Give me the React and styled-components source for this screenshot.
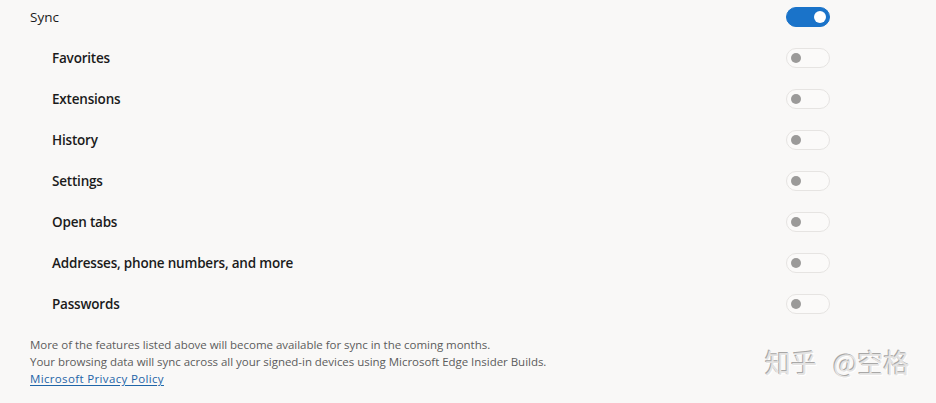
import React, { useState } from "react";
import styled, { createGlobalStyle } from "styled-components";

const Global = createGlobalStyle`
  html, body { margin: 0; padding: 0; background: #f9f8f7; }
  body { width: 936px; height: 403px; overflow: hidden; position: relative; }
`;

const Page = styled.div`
  width: 936px;
  height: 403px;
  box-sizing: border-box;
  padding: 0 106px 0 30px;
  font-family: "Open Sans", "Noto Sans", sans-serif;
  color: #1b1b1b;
  position: relative;
`;

const List = styled.div`
  display: flex;
  flex-direction: column;
  gap: 7px;
`;

const Row = styled.div`
  height: 34px;
  display: flex;
  align-items: center;
  justify-content: space-between;
  padding-left: ${(p) => (p.$nested ? "22px" : "0")};
`;

const Label = styled.span`
  font-size: 13.5px;
  font-weight: ${(p) => (p.$main ? 400 : 600)};
  letter-spacing: ${(p) => (p.$main ? "0" : "-0.2px")};
`;

const Track = styled.button`
  width: 44px;
  height: 20px;
  border-radius: 10px;
  box-sizing: border-box;
  padding: 0;
  cursor: pointer;
  position: relative;
  border: 1px solid ${(p) => (p.$on ? "#1a73c9" : "#e6e4e2")};
  background: ${(p) => (p.$on ? "#1a73c9" : "#fbfaf9")};
`;

const Knob = styled.span`
  position: absolute;
  top: 50%;
  width: ${(p) => (p.$on ? "12px" : "10px")};
  height: ${(p) => (p.$on ? "12px" : "10px")};
  border-radius: 50%;
  transform: translateY(-50%);
  left: ${(p) => (p.$on ? "27px" : "4px")};
  background: ${(p) => (p.$on ? "#ffffff" : "#9b9a99")};
`;

const Footer = styled.div`
  margin-top: 15px;
  font-size: 11.5px;
  line-height: 17px;
  color: #5c5c5c;
  letter-spacing: -0.03px;
`;

const Line = styled.div``;

const Link = styled.a`
  color: #1f65a8;
  text-decoration: underline;
  text-underline-offset: 2px;
  letter-spacing: 0.35px;
`;

const Watermark = styled.div`
  position: absolute;
  left: 765px;
  top: 347px;
  font-family: "Noto Sans CJK SC", sans-serif;
  font-size: 26px;
  line-height: 30px;
  color: #e4e3e2;
  text-shadow: -1px -1px 0 #a8a7a6, 1px 1px 0 #ffffff;
  white-space: nowrap;
`;

const Gap = styled.span`
  display: inline-block;
  width: 16px;
`;

function Toggle({ initial }) {
  const [on, setOn] = useState(initial);
  return (
    <Track $on={on} onClick={() => setOn(!on)} aria-pressed={on}>
      <Knob $on={on} />
    </Track>
  );
}

const items = [
  "Favorites",
  "Extensions",
  "History",
  "Settings",
  "Open tabs",
  "Addresses, phone numbers, and more",
  "Passwords",
];

export default function App() {
  return (
    <>
      <Global />
      <Page>
        <List>
          <Row>
            <Label $main>Sync</Label>
            <Toggle initial={true} />
          </Row>
          {items.map((t) => (
            <Row $nested key={t}>
              <Label>{t}</Label>
              <Toggle initial={false} />
            </Row>
          ))}
        </List>
        <Footer>
          <Line>More of the features listed above will become available for sync in the coming months.</Line>
          <Line>Your browsing data will sync across all your signed-in devices using Microsoft Edge Insider Builds.</Line>
          <Line>
            <Link href="#">Microsoft Privacy Policy</Link>
          </Line>
        </Footer>
        <Watermark>知乎<Gap />@空格</Watermark>
      </Page>
    </>
  );
}
